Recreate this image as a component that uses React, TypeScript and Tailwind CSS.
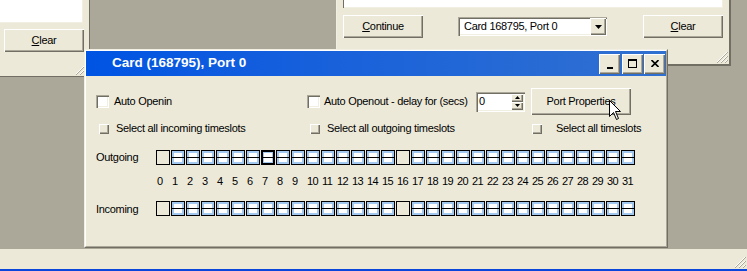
import React from "react";

const FONT = "font-['Liberation_Sans',Arial,sans-serif]";

// classic raised / sunken edges (XP colours in classic mode)
const RAISED =
  "bg-[#ECE9D8] shadow-[inset_1px_1px_0_#FFFFFF,inset_-1px_-1px_0_#716F64,inset_-2px_-2px_0_#ACA899]";
const SUNKEN =
  "bg-white shadow-[inset_1px_1px_0_#ACA899,inset_2px_2px_0_#716F64,inset_-1px_-1px_0_#FFFFFF,inset_-2px_-2px_0_#F1EFE2]";

function Grip() {
  return (
    <svg width="12" height="12" viewBox="0 0 12 12">
      <path d="M11 1 L1 11 M11 5 L5 11 M11 9 L9 11" stroke="#FFFFFF" strokeWidth="1" />
      <path d="M12 1 L1 12 M12 5 L5 12 M12 9 L9 12" stroke="#ACA899" strokeWidth="1" />
    </svg>
  );
}

function Button({ children, className = "" }: { children: React.ReactNode; className?: string }) {
  return (
    <div className={`${RAISED} flex items-center justify-center text-[11px] tracking-[-0.3px] text-black ${className}`}>
      {children}
    </div>
  );
}

function Checkbox() {
  return (
    <div className="w-[13px] h-[13px] shrink-0 bg-white shadow-[inset_1px_1px_0_#ACA899,inset_2px_2px_0_#716F64,inset_-1px_-1px_0_#FFFFFF,inset_-2px_-2px_0_#F1EFE2]" />
  );
}

function SmallSquare() {
  return (
    <div className="w-[10px] h-[10px] shrink-0 bg-[#ECE9D8] shadow-[inset_1px_1px_0_#FFFFFF,inset_-1px_-1px_0_#716F64,inset_-2px_-2px_0_#ACA899]" />
  );
}

type SlotKind = "empty" | "normal" | "focus";

function Slot({ kind }: { kind: SlotKind }) {
  if (kind === "empty") {
    return <div className="w-[14px] h-[15px] shrink-0 border border-black bg-[#ECE9D8]" />;
  }
  const focus = kind === "focus";
  return (
    <div
      className={`w-[14px] h-[15px] shrink-0 border-black bg-[#A2C8F0] flex flex-col ${
        focus ? "border-2" : "border"
      }`}
    >
      <div className={`flex-1 bg-white ${focus ? "mx-px mt-px" : "mx-[2px] mt-[2px]"}`} />
      <div className="h-px bg-black" />
      <div className={`flex-1 bg-white ${focus ? "mx-px mb-px" : "mx-[2px] mb-[2px]"}`} />
    </div>
  );
}

const slots = Array.from({ length: 32 }, (_, i) => i);

function SlotRow({ label, focus }: { label: string; focus?: number }) {
  return (
    <div className="flex items-center">
      <div className="w-[60px] text-[11px] tracking-[-0.3px]">{label}</div>
      <div className="flex gap-px">
        {slots.map((i) => (
          <Slot key={i} kind={i === 0 || i === 16 ? "empty" : i === focus ? "focus" : "normal"} />
        ))}
      </div>
    </div>
  );
}

export default function App() {
  return (
    <div className={`w-[747px] h-[271px] overflow-hidden flex flex-col bg-[#ACA899] text-black ${FONT}`}>
      {/* MDI workspace */}
      <div className="relative h-[249px]">
        {/* left child window (partly off screen) */}
        <div className="absolute left-0 top-0 w-[90px] h-[77px] bg-[#ECE9D8] border-r border-b border-[#716F64] flex flex-col">
          <div className="w-[83px] h-[23px] bg-white border-r border-b border-[#F1EFE2]" />
          <Button className="ml-[4px] mt-[6px] w-[80px] h-[23px]">
            <span>
              <u>C</u>lear
            </span>
          </Button>
          <div className="flex-1 flex items-end justify-end pr-[2px] pb-[1px]">
            <Grip />
          </div>
        </div>

        {/* right child window */}
        <div className="absolute left-[336px] top-0 w-[395px] h-[66px] bg-[#ECE9D8] border-l border-[#F1EFE2] border-r-2 border-b-2 border-r-[#716F64] border-b-[#716F64] flex flex-col">
          <div className="ml-[6px] w-[380px] h-[8px] bg-white shadow-[inset_1px_0_0_#716F64,inset_-1px_-1px_0_#F1EFE2]" />
          <div className="flex items-center mt-[7px] ml-[6px] h-[23px]">
            <Button className="w-[80px] h-[23px]">
              <span>
                <u>C</u>ontinue
              </span>
            </Button>
            <div className={`${SUNKEN} ml-[35px] w-[149px] h-[19px] flex items-center`}>
              <span className="pl-[6px] flex-1 text-[11px] tracking-[-0.3px]">Card 168795, Port 0</span>
              <div className={`${RAISED} w-[16px] h-[17px] mr-[1px] flex items-center justify-center`}>
                <svg width="7" height="4" viewBox="0 0 7 4">
                  <path d="M0 0 H7 L3.5 4 Z" fill="#000" />
                </svg>
              </div>
            </div>
            <Button className="ml-[36px] w-[80px] h-[23px]">
              <span>
                <u>C</u>lear
              </span>
            </Button>
          </div>
          <div className="flex-1 flex items-end justify-end pr-[1px] pb-[1px]">
            <Grip />
          </div>
        </div>

        {/* active dialog */}
        <div className="absolute left-[84px] top-[49px] w-[584px] h-[199px] bg-[#ECE9D8] border border-t-[#F1EFE2] border-l-[#F1EFE2] border-r-[#716F64] border-b-[#716F64]">
          <div className="h-full border border-t-white border-l-white border-r-[#ACA899] border-b-[#ACA899] flex flex-col">
            {/* title bar */}
            <div className="h-[25px] bg-gradient-to-r from-[#0054E3] to-[#3070D0] flex items-center pr-[1px]">
              <span className="ml-[26px] flex-1 text-white font-bold text-[13.5px]">Card (168795), Port 0</span>
              <Button className="w-[21px] h-[20px]">
                <div className="w-[6px] h-[2px] bg-black mt-[8px]" />
              </Button>
              <Button className="ml-[2px] w-[21px] h-[20px]">
                <div className="w-[9px] h-[9px] border border-t-2 border-black" />
              </Button>
              <Button className="ml-[1px] w-[21px] h-[20px]">
                <svg width="8" height="7" viewBox="0 0 8 7">
                  <path d="M0.5 0 L7.5 7 M7.5 0 L0.5 7" stroke="#000" strokeWidth="1.6" />
                </svg>
              </Button>
            </div>

            {/* body */}
            <div className="pl-[10px] pt-[12px] flex flex-col text-[11px] tracking-[-0.3px]">
              <div className="flex items-center h-[27px]">
                <div className="w-[211px] flex items-center">
                  <Checkbox />
                  <span className="ml-[5px]">Auto Openin</span>
                </div>
                <div className="w-[169px] flex items-center">
                  <Checkbox />
                  <span className="ml-[4px]">Auto Openout - delay for (secs)</span>
                </div>
                <div className={`${SUNKEN} w-[49px] h-[20px] flex items-center`}>
                  <span className="pl-[3px] flex-1">0</span>
                  <div className="flex flex-col mr-[2px]">
                    <div className={`${RAISED} w-[12px] h-[8px] flex items-center justify-center`}>
                      <svg width="5" height="3" viewBox="0 0 5 3">
                        <path d="M0 3 H5 L2.5 0 Z" fill="#000" />
                      </svg>
                    </div>
                    <div className={`${RAISED} w-[12px] h-[8px] flex items-center justify-center`}>
                      <svg width="5" height="3" viewBox="0 0 5 3">
                        <path d="M0 0 H5 L2.5 3 Z" fill="#000" />
                      </svg>
                    </div>
                  </div>
                </div>
                <Button className="ml-[6px] w-[100px] h-[27px]">Port Properties</Button>
              </div>

              <div className="flex items-center h-[19px] mt-[4px] pl-[3px]">
                <div className="w-[211px] flex items-center">
                  <SmallSquare />
                  <span className="ml-[7px]">Select all incoming timeslots</span>
                </div>
                <div className="w-[222px] flex items-center">
                  <SmallSquare />
                  <span className="ml-[7px]">Select all outgoing timeslots</span>
                </div>
                <div className="flex items-center">
                  <SmallSquare />
                  <span className="ml-[14px]">Select all timeslots</span>
                </div>
              </div>

              <div className="mt-[11px]">
                <SlotRow label="Outgoing" focus={7} />
              </div>

              <div className="flex h-[15px] mt-[8px] items-center">
                <div className="w-[60px]" />
                <div className="flex gap-px tracking-[-0.5px]">
                  {slots.map((i) => (
                    <div key={i} className="w-[14px] pl-px whitespace-nowrap leading-[15px]">
                      {i}
                    </div>
                  ))}
                </div>
              </div>

              <div className="mt-[12px]">
                <SlotRow label="Incoming" />
              </div>
            </div>
          </div>
        </div>

        {/* mouse pointer */}
        <svg className="absolute left-[609px] top-[100px]" width="13" height="21" viewBox="0 0 13 21">
          <path
            d="M0.5 0.5 V16.5 L4.5 12.5 L7.5 19.5 L9.5 18.5 L6.5 11.5 H11.5 Z"
            fill="#FFFFFF"
            stroke="#000000"
            strokeWidth="1"
          />
        </svg>
      </div>

      {/* parent status bar */}
      <div className="h-[20px] bg-[#ECE9D8] flex items-end justify-end pr-[1px] pb-[1px]">
        <Grip />
      </div>
      <div className="h-[2px] bg-[#0A46DA]" />
    </div>
  );
}
